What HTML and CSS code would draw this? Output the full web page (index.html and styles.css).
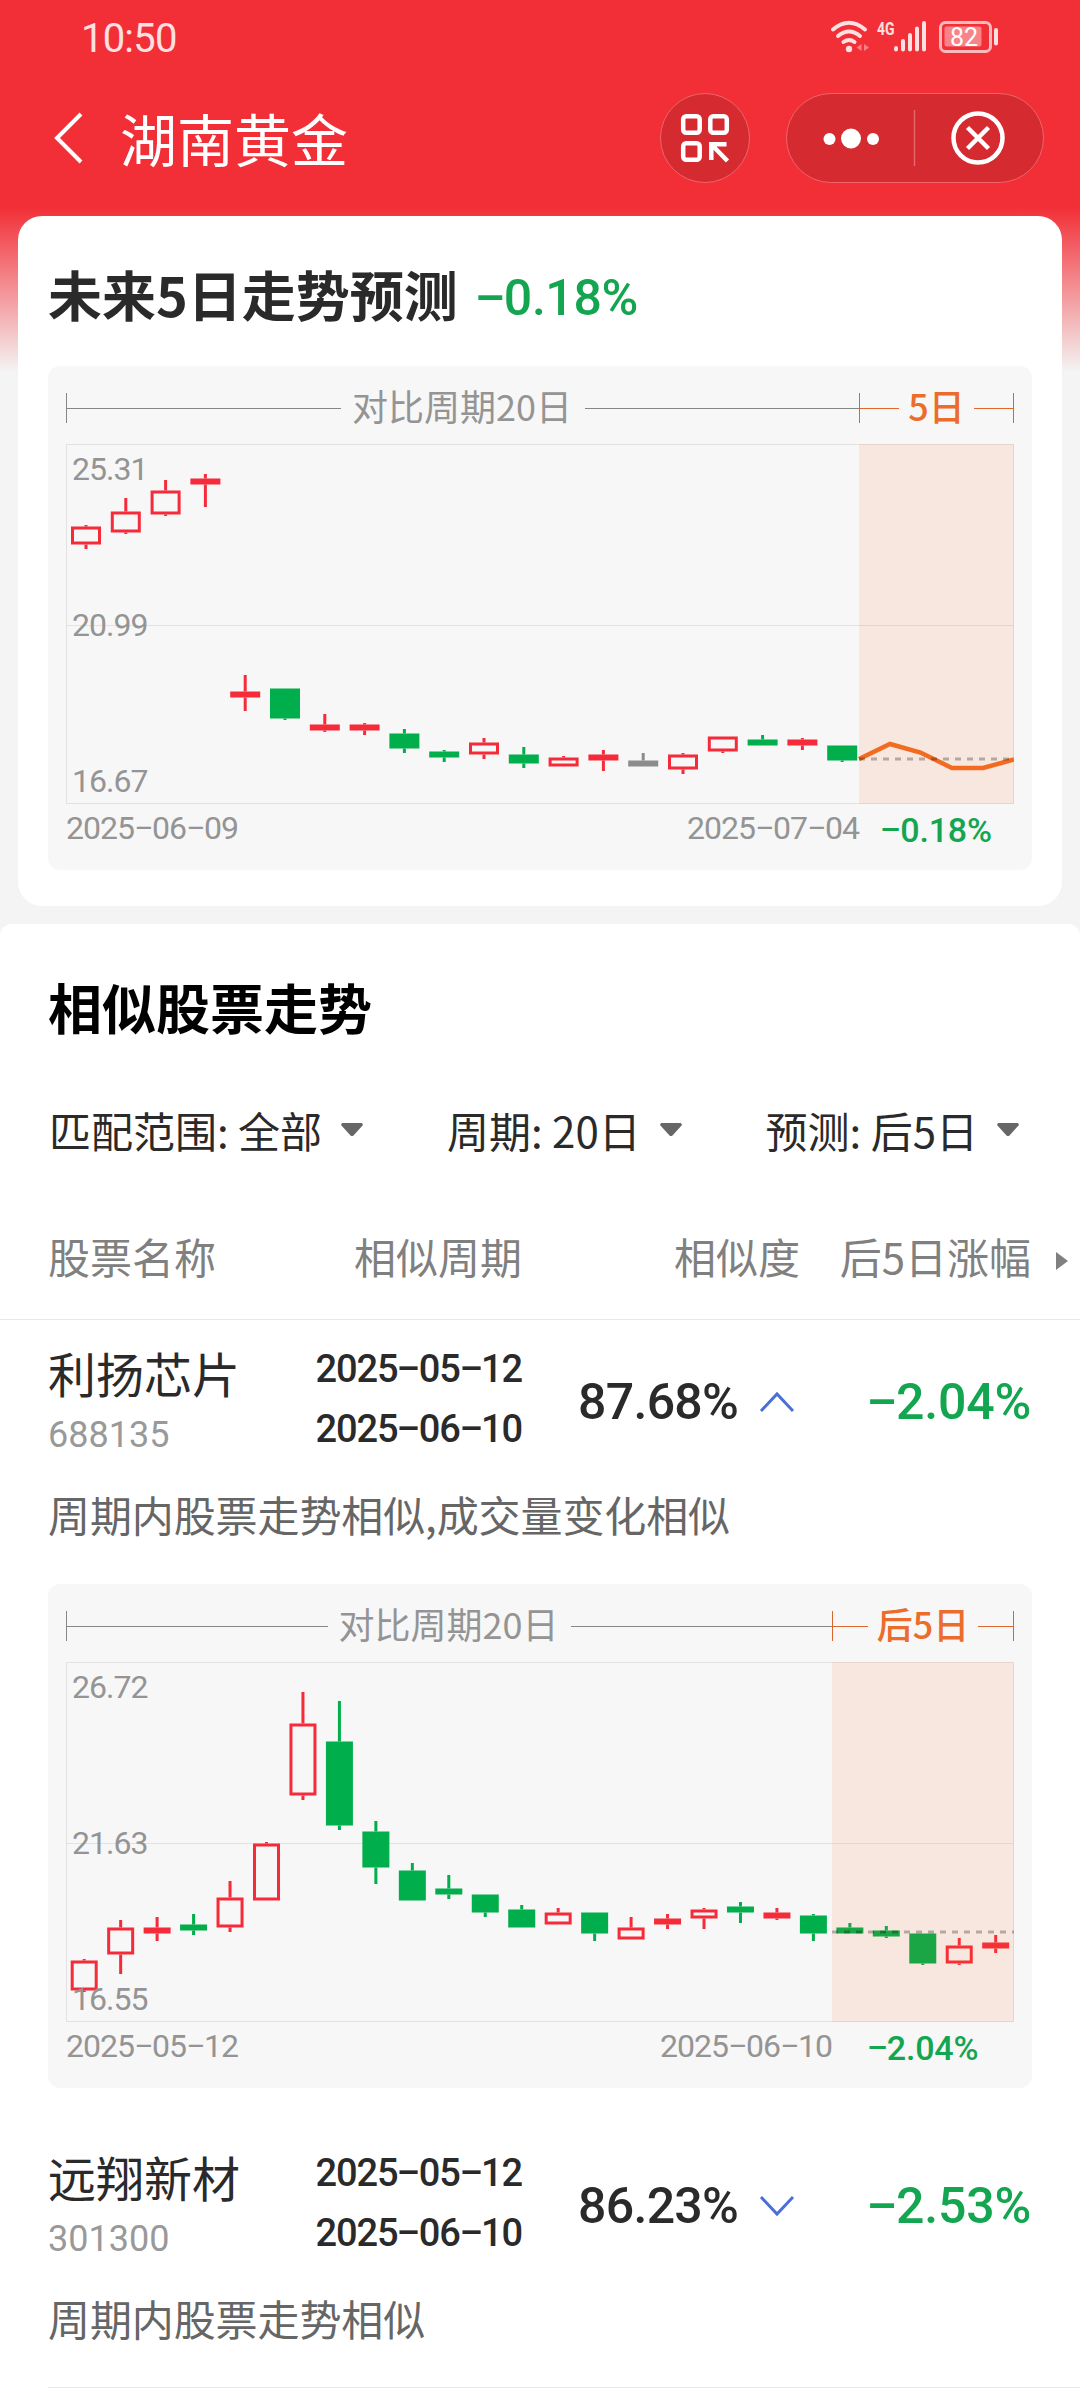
FILE: index.html
```html
<!DOCTYPE html>
<html lang="zh-CN">
<head>
<meta charset="utf-8">
<title>湖南黄金</title>
<link rel="stylesheet" href="styles.css">
</head>
<body>
<div class="status">
  <span class="clock num">10:50</span>
  <svg class="status-icons" width="170" height="46" viewBox="830 9 170 46">
    <g fill="none" stroke="#fde0e1" stroke-width="4" stroke-linecap="round">
      <path d="M833 29.500Q849 16 865 29.500"/>
      <path d="M838 36Q849 27 860 36"/>
      <path d="M843.500 42Q849 38 854.500 42"/>
    </g>
    <circle cx="849" cy="49" r="3.200" fill="#fde0e1"/>
    <path d="M861.500 44v7l-5-3.500zM864 44v7l5-3.500z" fill="#f98085"/>
    <text class="net" x="877" y="35" textLength="17.500" lengthAdjust="spacingAndGlyphs">4G</text>
    <path d="M896 48v1.500M903 41v8.500M910 35v14.500M917 28.500v21M924 23v26.500" stroke="#fde0e1" stroke-width="4" stroke-linecap="round"/>
    <rect x="940.500" y="22.500" width="50" height="29" rx="5" fill="none" stroke="#fbb9bc" stroke-width="3"/>
    <rect x="944.500" y="26.500" width="37" height="20" rx="2" fill="#f88388"/>
    <path d="M996 30v13.500" stroke="#fde0e1" stroke-width="4" stroke-linecap="round"/>
    <text class="level" x="964" y="46" text-anchor="middle">82</text>
  </svg>
</div>
<header class="nav">
  <svg class="back" width="34" height="56" viewBox="0 0 34 56"><path d="M30 4 6 28l24 24" fill="none" stroke="#fff" stroke-width="4"/></svg>
  <h1 class="nav-title">湖南黄金</h1>
  <div class="scan">
    <svg width="50" height="50" viewBox="0 0 50 50" fill="none" stroke="#fff" stroke-width="4.500">
      <rect x="3.200" y="3.200" width="16.500" height="16.500" rx="3"/>
      <rect x="30.300" y="3.200" width="16.500" height="16.500" rx="3"/>
      <rect x="3.200" y="30.300" width="16.500" height="16.500" rx="3"/>
      <path d="M46.500 31.300H31.300V47M31.500 31.500 47.500 48"/>
    </svg>
  </div>
  <div class="capsule">
    <svg width="256" height="88" viewBox="0 0 256 88">
      <g fill="#fff"><circle cx="42.500" cy="45" r="6"/><circle cx="64" cy="44.500" r="10"/><circle cx="86" cy="45" r="6"/></g>
      <path d="M127.500 16v56" stroke="#e3676c" stroke-width="1.500"/>
      <circle cx="191" cy="44" r="24.500" fill="none" stroke="#fff" stroke-width="4.500"/>
      <path d="M180.500 33.500l21 21M201.500 33.500l-21 21" stroke="#fff" stroke-width="4.500"/>
    </svg>
  </div>
</header>

<section class="forecast">
  <div class="forecast-head">
    <h2>未来5日走势预测</h2>
    <span class="num big down"><span class="dash">-</span>0.18%</span>
  </div>
  <div class="panel">
    <div class="scale">
      <div class="range past forecast-past"><span>对比周期20日</span></div>
      <div class="range next"><span>5日</span></div>
    </div>
    <svg class="plot" id="forecast-chart" width="948" height="360" viewBox="0 0 948 360"></svg>
    <div class="axis">
      <div class="axis-dates forecast-past num"><span>2025<i class="dash">-</i>06<i class="dash">-</i>09</span><span>2025<i class="dash">-</i>07<i class="dash">-</i>04</span></div>
      <div class="axis-change num down"><span class="dash">-</span>0.18%</div>
    </div>
  </div>
</section>

<section class="similar">
  <h2 class="similar-title">相似股票走势</h2>
  <div class="filters">
    <span class="filter">匹配范围: 全部<svg width="22" height="14" viewBox="0 0 22 14"><path d="M1 0h20l1 2-9.500 10.500q-1.500 1.200-3 0L0 2z"/></svg></span>
    <span class="filter">周期: 20日<svg width="22" height="14" viewBox="0 0 22 14"><path d="M1 0h20l1 2-9.500 10.500q-1.500 1.200-3 0L0 2z"/></svg></span>
    <span class="filter">预测: 后5日<svg width="22" height="14" viewBox="0 0 22 14"><path d="M1 0h20l1 2-9.500 10.500q-1.500 1.200-3 0L0 2z"/></svg></span>
  </div>
  <div class="columns thead">
    <span>股票名称</span><span class="right">相似周期</span><span class="right">相似度</span><span class="right">后5日涨幅</span>
    <svg class="more" width="13" height="18" viewBox="0 0 13 18"><path d="M1 0 13 9 1 18z"/></svg>
  </div>

  <article class="stock">
    <div class="columns">
      <div class="stock-name"><h3>利扬芯片</h3><span class="code num">688135</span></div>
      <div class="dates num"><span>2025<i class="dash">-</i>05<i class="dash">-</i>12</span><span>2025<i class="dash">-</i>06<i class="dash">-</i>10</span></div>
      <div class="score num big">87.68%<svg width="36" height="22" viewBox="0 0 36 22"><path d="M2 20 18 3l16 17"/></svg></div>
      <div class="change num big down right"><span class="dash">-</span>2.04%</div>
    </div>
    <p class="reason">周期内股票走势相似,成交量变化相似</p>
    <div class="panel">
      <div class="scale">
        <div class="range past similar-past"><span>对比周期20日</span></div>
        <div class="range next"><span>后5日</span></div>
      </div>
      <svg class="plot" id="similar-chart" width="948" height="360" viewBox="0 0 948 360"></svg>
      <div class="axis">
        <div class="axis-dates similar-past num"><span>2025<i class="dash">-</i>05<i class="dash">-</i>12</span><span>2025<i class="dash">-</i>06<i class="dash">-</i>10</span></div>
        <div class="axis-change num down"><span class="dash">-</span>2.04%</div>
      </div>
    </div>
  </article>

  <article class="stock last">
    <div class="columns">
      <div class="stock-name"><h3>远翔新材</h3><span class="code num">301300</span></div>
      <div class="dates num"><span>2025<i class="dash">-</i>05<i class="dash">-</i>12</span><span>2025<i class="dash">-</i>06<i class="dash">-</i>10</span></div>
      <div class="score num big">86.23%<svg width="36" height="22" viewBox="0 0 36 22"><path d="M2 2l16 17L34 2"/></svg></div>
      <div class="change num big down right"><span class="dash">-</span>2.53%</div>
    </div>
    <p class="reason">周期内股票走势相似</p>
  </article>
</section>
<script src="charts.js"></script>
</body>
</html>
```

FILE: styles.css
```css
* { box-sizing: border-box; margin: 0; padding: 0; }
body {
  width: 1080px;
  height: 2400px;
  overflow: hidden;
  font-family: "Noto Sans CJK SC", sans-serif;
  color: #2a2a2a;
  background: #f4f4f4 linear-gradient(#f22f37 0, #f22f37 207px, #f4f4f4 372px) no-repeat;
}
h1, h2, h3, i { font-weight: inherit; font-style: normal; }
svg { display: block; flex: none; }
.num { font-family: Roboto, "Noto Sans CJK SC", sans-serif; }
.dash {
  display: inline-block;
  width: .56em;
  text-align: center;
  transform: translateY(-.05em) scaleX(1.85);
}
.big { font-size: 50px; font-weight: 500; letter-spacing: -.7px; }
.down { color: #13a550; }
.right { text-align: right; }

.status { height: 72px; padding: 0 80px 0 81px; display: flex; justify-content: space-between; }
.clock { font-size: 40px; line-height: 77px; color: #fde0e1; letter-spacing: -.8px; }
.status-icons { margin-top: 9px; }
.net { font: 700 19px Roboto, sans-serif; fill: #fde0e1; }
.level { font: 400 25px Roboto, sans-serif; fill: #fff; }

.nav { height: 132px; padding: 0 36px 0 51px; display: flex; align-items: center; }
.nav-title { margin: -3px 0 0 35px; flex: 1; font-size: 57px; line-height: 80px; color: #fff; }
.scan, .capsule {
  height: 90px;
  display: flex;
  align-items: center;
  justify-content: center;
  background: #d62a31;
  border: 1px solid #ee646a;
  border-radius: 45px;
}
.scan { width: 90px; margin-right: 36px; }
.capsule { width: 258px; }

.forecast { height: 690px; margin: 12px 18px 0; padding: 0 30px; background: #fff; border-radius: 24px; }
.forecast-head { height: 150px; display: flex; align-items: center; }
.forecast-head h2 { margin-top: 5px; font-size: 54px; font-weight: 700; line-height: 80px; }
.forecast-head .big { margin: 13px 0 0 18px; letter-spacing: -.4px; }

.panel { height: 504px; padding: 27px 18px 0; background: #f7f7f7; border-radius: 12px; }
.scale { height: 30px; display: flex; }
.range { display: flex; align-items: center; border-left: 1px solid #868686; font-size: 36px; line-height: 30px; white-space: nowrap; }
.range span { margin-top: -6px; }
.range::before, .range::after { content: ""; flex: 1; height: 1px; background: #868686; }
.past { gap: 13px; color: #949494; }
.past span { margin-left: -2px; }
.next { flex: 1; gap: 9px; color: #ec6c2c; font-weight: 500; border-color: #d9662c; border-right: 1px solid #d9662c; }
.next::before, .next::after { background: #e0662a; }
.forecast-past { width: 793px; }
.similar-past { width: 766px; }
.plot { margin-top: 21px; }
.plot text { font: 32px Roboto, sans-serif; letter-spacing: -1px; fill: #949494; }
.axis { display: flex; line-height: 40px; }
.axis-dates { display: flex; justify-content: space-between; padding-top: 4px; font-size: 32px; letter-spacing: -.95px; color: #949494; }
.axis-change { flex: 1; padding: 6px 0 0; font-size: 34px; font-weight: 500; letter-spacing: -.2px; text-align: center; }

.similar { height: 1476px; margin-top: 18px; background: #fff; border-radius: 12px 12px 0 0; }
.similar-title { padding: 43px 48px 0; font-size: 54px; font-weight: 700; line-height: 80px; color: #000; }
.filters { height: 60px; margin-top: 53px; padding: 0 61px 0 49px; display: flex; justify-content: space-between; align-items: center; font-size: 42px; line-height: 60px; }
.filter { display: flex; align-items: center; gap: 19px; }
.filter svg { fill: #666; }
.columns { display: grid; grid-template-columns: 190px 284px 278px 231px; padding-left: 48px; align-items: center; }
.thead { position: relative; height: 160px; padding-top: 33px; font-size: 42px; color: #808080; border-bottom: 1px solid #e8e8e8; }
.thead span { line-height: 60px; }
.more { position: absolute; right: 12px; top: 92px; fill: #808080; }

.stock { height: 804px; }
.stock .columns { height: 168px; }
.stock h3 { font-size: 48px; line-height: 60px; }
.stock-name { white-space: nowrap; margin-top: -6px; }
.code { display: block; font-size: 36px; line-height: 52px; color: #999; margin-top: 7px; }
.dates { display: grid; justify-content: end; margin-top: -10px; font-size: 38px; font-weight: 500; line-height: 60px; letter-spacing: -1.1px; }
.score { display: flex; align-items: center; margin-top: -4px; padding-left: 56px; gap: 21px; }
.change { margin-top: -4px; letter-spacing: -.2px; }
.score svg { fill: none; stroke: #4a70d8; stroke-width: 3; }
.reason { margin-top: -4px; padding-left: 48px; font-size: 42px; line-height: 60px; letter-spacing: -.1px; color: #666; }
.stock .panel { margin: 40px 48px 0; }
.last { height: 264px; margin-left: 48px; border-bottom: 1px solid #e8e8e8; }
.last .columns, .last .reason { padding-left: 0; }
```

FILE: charts.js
```js
const RED = '#f62b3a', GREEN = '#00ae4b', FLAT = '#8c8c8c', ORANGE = '#f26b21';

// Candle: [kind, high, bodyTop, bodyBottom, low]; h = hollow red, r = red, g = green, f = flat.
function drawChart(id, o) {
  const parts = [];
  o.candles.forEach(([kind, high, top, bottom, low], i) => {
    const x = o.first + i * o.pitch;
    const left = x - o.width / 2;
    const color = kind === 'g' ? GREEN : kind === 'f' ? FLAT : RED;
    parts.push(`<path d="M${x} ${high}V${top}M${x} ${bottom}V${low}" stroke="${color}" stroke-width="3"/>`);
    parts.push(kind === 'h'
      ? `<rect x="${left + 1.5}" y="${top + 1.5}" width="${o.width - 3}" height="${bottom - top - 3}" fill="none" stroke="${color}" stroke-width="3"/>`
      : `<rect x="${left}" y="${top}" width="${o.width}" height="${bottom - top}" fill="${color}"/>`);
  });
  document.getElementById(id).innerHTML =
    `<path d="M0 181.5H948M.5 .5H947.5V359.500H.5Z" fill="none" stroke="#e2e2e2"/>` +
    parts.join('') +
    `<rect x="${o.split}" width="${948 - o.split}" height="360" fill="#ff6018" fill-opacity=".1"/>` +
    (o.line ? `<polyline points="${o.line}" fill="none" stroke="${ORANGE}" stroke-width="4.5"/>` : '') +
    `<path d="M${o.split} ${o.base}H948" stroke="#000" stroke-opacity=".27" stroke-width="3" stroke-dasharray="6 6"/>` +
    o.labels.map((t, i) => `<text x="6" y="${36 + i * 156}">${t}</text>`).join('');
}

drawChart('forecast-chart', {
  first: 20, pitch: 39.8, width: 30, split: 793, base: 315,
  labels: ['25.31', '20.99', '16.67'],
  line: '793,315 824,300 854.5,308.500 886,324 917,324 948,315.500',
  candles: [
    ['h', 81, 82.5, 100.5, 105], ['h', 54, 67.5, 88.5, 90], ['h', 36, 46.5, 70.5, 72], ['r', 30, 34.5, 40.5, 63],
    ['r', 231, 247.5, 253.5, 267], ['g', 244.5, 244.5, 274.5, 276], ['r', 270, 280.5, 286.5, 288], ['r', 279, 280.5, 286.5, 291],
    ['g', 285, 289.5, 304.5, 309], ['g', 306, 307.5, 313.5, 318], ['h', 294, 298.5, 310.5, 315], ['g', 303, 310.5, 319.5, 324],
    ['h', 312, 313.5, 322.5, 322.5], ['r', 306, 310.5, 316.5, 327], ['f', 309, 316.5, 322.5, 322.5], ['h', 309, 310.5, 325.5, 330],
    ['h', 292.5, 292.5, 307.5, 309], ['g', 291, 295.5, 301.5, 301.5], ['r', 294, 295.5, 301.5, 306], ['g', 301.5, 301.5, 316.5, 318]
  ]
});

drawChart('similar-chart', {
  first: 18.2, pitch: 36.46, width: 27, split: 766, base: 270,
  labels: ['26.72', '21.63', '16.55'],
  candles: [
    ['h', 297, 298.5, 328.5, 330], ['h', 258, 265.5, 292.5, 312], ['r', 255, 265.5, 271.5, 279], ['g', 252, 262.5, 268.5, 273],
    ['h', 219, 235.5, 265.5, 270], ['h', 180, 181.5, 238.5, 238.5], ['h', 30, 61.5, 133.5, 138], ['g', 39, 79.5, 163.5, 168],
    ['g', 159, 169.5, 205.5, 222], ['g', 201, 208.5, 238.5, 238.5], ['g', 213, 226.5, 232.5, 237], ['g', 232.5, 232.5, 250.5, 255],
    ['g', 243, 247.5, 265.5, 265.5], ['h', 246, 250.5, 262.5, 262.5], ['g', 250.5, 250.5, 271.5, 279], ['h', 255, 265.5, 277.5, 277.5],
    ['r', 252, 256.5, 262.5, 267], ['h', 246, 247.5, 256.5, 267], ['g', 240, 244.5, 250.5, 261], ['r', 246, 250.5, 256.5, 258],
    ['g', 252, 253.5, 271.5, 279], ['g', 261, 265.5, 271.5, 271.5], ['g', 264, 268.5, 274.5, 276], ['g', 271.5, 271.5, 301.5, 303],
    ['h', 276, 283.5, 301.5, 303], ['r', 273, 280.5, 286.5, 291]
  ]
});
```
